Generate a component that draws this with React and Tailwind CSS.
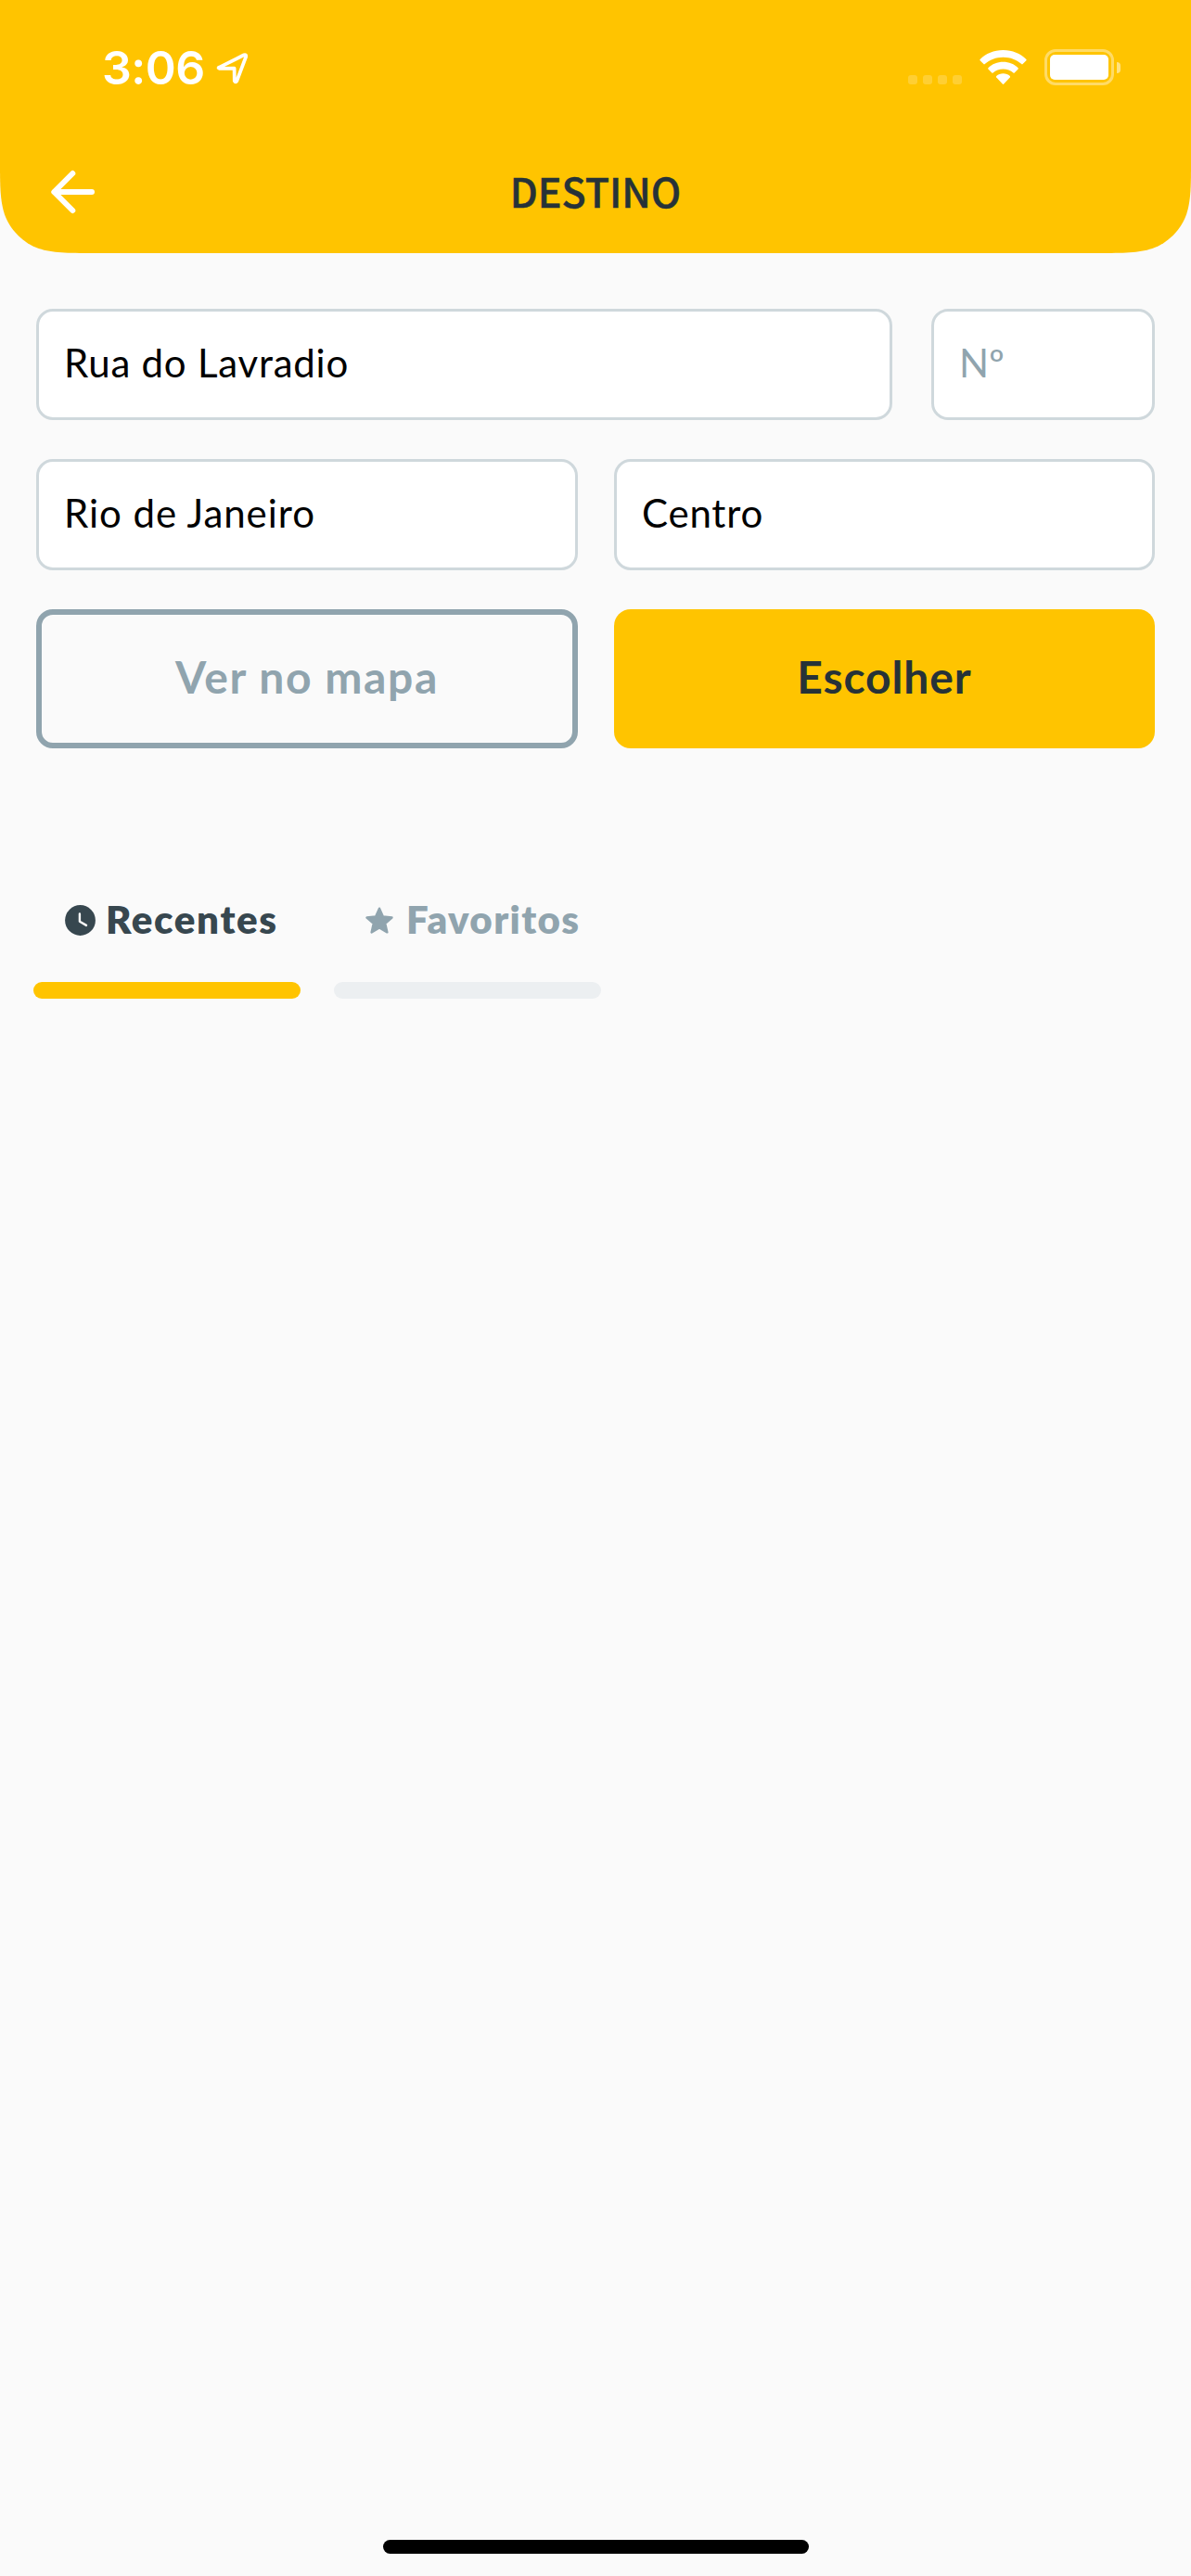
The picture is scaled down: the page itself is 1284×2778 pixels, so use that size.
function LocationIcon() {
  return (
    <svg className="ml-[9px] h-[40px] w-[40px]" viewBox="0 0 40 40" fill="none">
      <path
        d="M6.4 19.6 L33 6.3 Q35.6 5.5 35.1 8.4 L25.3 34.4 Q24 36.2 22.8 34.2 L22.6 20.7 L6.6 20.8 Q4.6 20.4 6.4 19.6 Z"
        stroke="#fff"
        strokeWidth="3.8"
        strokeLinejoin="round"
      />
    </svg>
  );
}

function SignalDots() {
  return (
    <div className="flex gap-[6px]">
      {[0, 1, 2, 3].map((i) => (
        <span key={i} className="size-[10px] rounded-[3px] bg-white/20" />
      ))}
    </div>
  );
}

function WifiIcon() {
  return (
    <svg className="h-[38px] w-[51px]" viewBox="0 0 51 38" fill="#fff">
      <path d="M25.5 0 C35.5 0 44.2 3.8 50.4 10 Q51 10.7 50.4 11.3 L46.6 15.1 Q46 15.7 45.3 15.1 C40 10.4 33.2 7.7 25.5 7.7 C17.8 7.7 11 10.4 5.7 15.1 Q5 15.7 4.4 15.1 L0.6 11.3 Q0 10.7 0.6 10 C6.8 3.8 15.5 0 25.5 0 Z" />
      <path d="M25.5 12.8 C31.8 12.8 37.4 15.2 41.6 19.2 Q42.2 19.9 41.6 20.5 L37.7 24.4 Q37.1 25 36.4 24.4 C33.5 21.9 29.7 20.4 25.5 20.4 C21.3 20.4 17.5 21.9 14.6 24.4 Q13.9 25 13.3 24.4 L9.4 20.5 Q8.8 19.9 9.4 19.2 C13.6 15.2 19.2 12.8 25.5 12.8 Z" />
      <path d="M25.5 25.3 C28.3 25.3 30.9 26.3 32.8 28 Q33.4 28.7 32.8 29.4 L26.2 36.6 Q25.5 37.3 24.8 36.6 L18.2 29.4 Q17.6 28.7 18.2 28 C20.1 26.3 22.7 25.3 25.5 25.3 Z" />
    </svg>
  );
}

function Battery() {
  return (
    <div className="flex items-center">
      <div className="h-[39px] w-[75px] rounded-[12px] border-[3px] border-white/40 p-[3px]">
        <div className="h-full w-full rounded-[5px] bg-white" />
      </div>
      <div className="ml-[3px] h-[12px] w-[4px] rounded-r-full bg-white/50" />
    </div>
  );
}

function BackIcon() {
  return (
    <svg className="h-[52px] w-[52px]" viewBox="0 0 52 52" fill="none" stroke="#fff" strokeWidth="6" strokeLinecap="round" strokeLinejoin="round">
      <path d="M28.3 6 L8.3 26 L28.3 46" />
      <path d="M9 26 H49" />
    </svg>
  );
}

function Field({ children, className }) {
  return (
    <div
      className={`flex h-[120px] items-center rounded-[18px] border-[3px] border-[#cfd8dc] bg-white pb-[4px] pl-[27px] text-[42px] ${className}`}
    >
      {children}
    </div>
  );
}

function ClockIcon() {
  return (
    <svg className="h-[33px] w-[33px]" viewBox="0 0 33 33">
      <circle cx="16.5" cy="16.5" r="16.4" fill="#37474f" />
      <path d="M15.9 9.5 V17.8 L23 21.9" fill="none" stroke="#fafafa" strokeWidth="2.4" strokeLinecap="round" strokeLinejoin="round" />
    </svg>
  );
}

function StarIcon() {
  return (
    <svg className="h-[30px] w-[30px]" viewBox="0 0 30 30">
      <path
        d="M15 1.7 L18.9 10.5 L28.5 11.5 L21.3 17.9 L23.4 27.4 L15 22.5 L6.6 27.4 L8.7 17.9 L1.5 11.5 L11.1 10.5 Z"
        fill="#90a4ae"
        stroke="#90a4ae"
        strokeWidth="2.4"
        strokeLinejoin="round"
      />
    </svg>
  );
}

export default function App() {
  return (
    <div className="flex h-[2778px] w-[1284px] flex-col bg-[#fafafa] font-['Lato',sans-serif]">
      <header className="h-[273px] bg-[#ffc400] [clip-path:path('M0_0H1284V172.1C1284_201.16_1284_215.68_1279.06_231.32C1272.84_248.39_1259.39_261.84_1242.32_268.06C1226.68_273_1212.16_273_1183.1_273H100.9C71.84_273_57.32_273_41.68_268.06C24.61_261.84_11.16_248.39_4.94_231.32C0_215.68_0_201.16_0_172.1Z')]">
        <div className="flex h-[145px] items-center justify-between pr-[76px] pl-[110px]">
          <div className="flex items-center font-['Inter',sans-serif] text-[50px] leading-[60px] font-semibold tracking-[-0.5px] text-white">
            3:06
            <LocationIcon />
          </div>
          <div className="flex items-center">
            <div className="mt-[27px] mr-[19px]">
              <SignalDots />
            </div>
            <div className="mt-px mr-[19px]">
              <WifiIcon />
            </div>
            <Battery />
          </div>
        </div>
        <div className="grid h-[124px] grid-cols-[1fr_auto_1fr] items-center pl-[50px] pr-[50px]">
          <BackIcon />
          <h1 className="pb-[4px] font-['Noto_Sans_CJK_SC',sans-serif] text-[43px] leading-[60px] font-medium text-[#263238] [-webkit-text-stroke:0.5px_#263238]">
            DESTINO
          </h1>
        </div>
      </header>

      <main className="flex flex-1 flex-col px-[39px] pt-[60px]">
        <div className="flex gap-[42px] text-black">
          <Field className="w-[923px] tracking-[0.77px]">Rua do Lavradio</Field>
          <Field className="flex-1 text-[#90a4ae]!">Nº</Field>
        </div>
        <div className="mt-[42px] grid grid-cols-[584px_583px] gap-[39px] text-black">
          <Field className="tracking-[0.95px]">Rio de Janeiro</Field>
          <Field className="tracking-[0.8px]">Centro</Field>
        </div>
        <div className="mt-[42px] grid grid-cols-[584px_583px] gap-[39px] text-[48px] font-bold">
          <button className="h-[150px] rounded-[18px] border-[6px] border-[#90a4ae] pb-[5px] tracking-[1.6px] text-[#90a4ae]">
            Ver no mapa
          </button>
          <button className="h-[150px] rounded-[18px] bg-[#ffc400] pb-[5px] tracking-[0.9px] text-[#263238]">
            Escolher
          </button>
        </div>

        <div className="-ml-[3px] mt-[154px] flex gap-[36px] text-[42px] leading-[60px] font-extrabold">
          <div className="w-[288px]">
            <div className="flex h-[60px] items-center pl-[34px] tracking-[1.65px] text-[#37474f]">
              <div className="mt-[3px] mr-[11px]">
                <ClockIcon />
              </div>
              Recentes
            </div>
            <div className="mt-[38px] h-[18px] rounded-full bg-[#ffc400]" />
          </div>
          <div className="w-[288px]">
            <div className="flex h-[60px] items-center pl-[34px] tracking-[1.4px] text-[#90a4ae]">
              <div className="mt-[3px] mr-[14px]">
                <StarIcon />
              </div>
              Favoritos
            </div>
            <div className="mt-[38px] h-[18px] rounded-full bg-[#eceff1]" />
          </div>
        </div>
      </main>

      <footer className="flex justify-center pb-[24px]">
        <div className="h-[15px] w-[459px] rounded-full bg-black" />
      </footer>
    </div>
  );
}
